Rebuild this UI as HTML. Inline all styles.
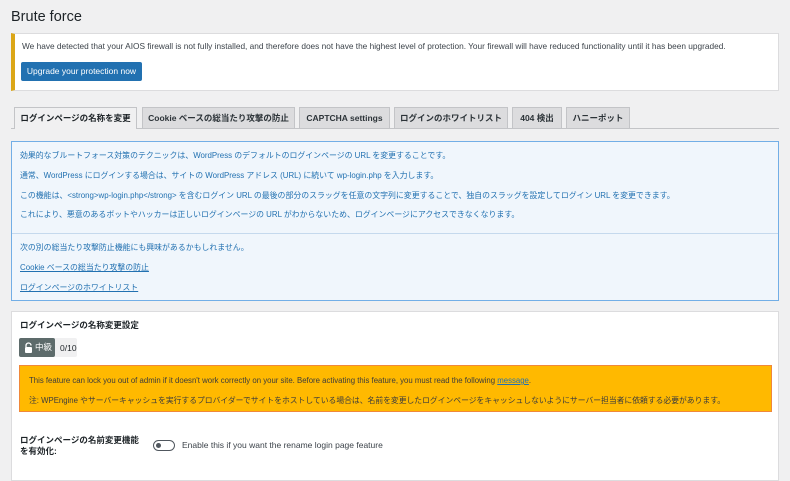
<!DOCTYPE html>
<html><head><meta charset="utf-8"><style>
*{box-sizing:border-box;margin:0;padding:0}
body{width:790px;height:477px;overflow:hidden;background:#f0f0f1;font-family:"Liberation Sans","Noto Sans CJK JP",sans-serif;color:#1d2327;position:relative}
.a{position:absolute;white-space:nowrap}
h1{position:absolute;left:11px;top:9px;font-size:14.5px;font-weight:400}
.notice{position:absolute;left:11px;top:33px;width:768px;height:58px;background:#fff;border:1px solid #dcdcde;border-left:4px solid #dba617}
.btn{position:absolute;left:6px;top:28px;width:121px;height:19px;background:#2271b1;border-radius:2px;color:#fff;font-size:8.5px;line-height:19px;text-align:center}
.tabs{position:absolute;left:11px;top:128px;width:768px;height:1px;background:#c3c4c7}
.tab{position:absolute;top:107px;height:21px;background:#dcdcde;border:1px solid #c3c4c7;border-bottom:none;font-size:8.5px;font-weight:bold;line-height:20px;text-align:center;color:#2c3338}
.info{position:absolute;left:11px;top:141px;width:768px;height:160px;background:#f0f6fc;border:1px solid #72aee6;color:#2271b1;font-size:7.9px}
.info div{position:absolute;left:8px;white-space:nowrap}
.panel{position:absolute;left:11px;top:311px;width:768px;height:170px;background:#fff;border:1px solid #dcdcde}
.warn{position:absolute;left:7px;top:53px;width:753px;height:47px;background:#ffb900;border:1px solid #f0883a;font-size:7.8px;color:#3c3c3c}
</style></head><body>
<h1>Brute force</h1>
<div class="notice">
<div class="a" style="left:7px;top:7px;font-size:8.3px;color:#3c434a">We have detected that your AIOS firewall is not fully installed, and therefore does not have the highest level of protection. Your firewall will have reduced functionality until it has been upgraded.</div>
<div class="btn">Upgrade your protection now</div>
</div>
<div class="tabs"></div>
<div class="tab" style="left:14px;width:123px;background:#f0f0f1;height:22px;color:#1d2327">ログインページの名称を変更</div>
<div class="tab" style="left:142px;width:153px">Cookie ベースの総当たり攻撃の防止</div>
<div class="tab" style="left:299px;width:91px">CAPTCHA settings</div>
<div class="tab" style="left:394px;width:114px">ログインのホワイトリスト</div>
<div class="tab" style="left:512px;width:50px">404 検出</div>
<div class="tab" style="left:566px;width:64px">ハニーポット</div>
<div class="info">
<div style="top:8px">効果的なブルートフォース対策のテクニックは、WordPress のデフォルトのログインページの URL を変更することです。</div>
<div style="top:28px">通常、WordPress にログインする場合は、サイトの WordPress アドレス (URL) に続いて wp-login.php を入力します。</div>
<div style="top:48px">この機能は、&lt;strong&gt;wp-login.php&lt;/strong&gt; を含むログイン URL の最後の部分のスラッグを任意の文字列に変更することで、独自のスラッグを設定してログイン URL を変更できます。</div>
<div style="top:67px">これにより、悪意のあるボットやハッカーは正しいログインページの URL がわからないため、ログインページにアクセスできなくなります。</div>
<div style="top:91px;left:0;width:766px;height:1px;background:#c5d9ed"></div>
<div style="top:100px">次の別の総当たり攻撃防止機能にも興味があるかもしれません。</div>
<div style="top:120px;text-decoration:underline">Cookie ベースの総当たり攻撃の防止</div>
<div style="top:140px;text-decoration:underline">ログインページのホワイトリスト</div>
</div>
<div class="panel">
<div class="a" style="left:8px;top:7px;font-size:8.5px;font-weight:bold">ログインページの名称変更設定</div>
<div class="a" style="left:7px;top:26px;width:58px;height:19px;background:#f0f0f1;border-radius:2px"></div>
<div class="a" style="left:7px;top:26px;width:36px;height:19px;background:#5d6b6b;border-radius:2px;color:#fff;font-size:8.5px;line-height:19px;padding-left:16px">中級</div>
<svg class="a" style="left:12px;top:30px" width="9" height="11" viewBox="0 0 9 11"><path d="M2 5V3.5a2.5 2.5 0 0 1 5 0" stroke="#fff" stroke-width="1.3" fill="none"/><rect x="1" y="5" width="7" height="6" rx="1" fill="#fff"/></svg>
<div class="a" style="left:48px;top:31px;font-size:8.5px">0/10</div>
<div class="warn">
<div class="a" style="left:9px;top:10px">This feature can lock you out of admin if it doesn't work correctly on your site. Before activating this feature, you must read the following <span style="color:#2271b1;text-decoration:underline">message</span>.</div>
<div class="a" style="left:9px;top:29px">注: WPEngine やサーバーキャッシュを実行するプロバイダーでサイトをホストしている場合は、名前を変更したログインページをキャッシュしないようにサーバー担当者に依頼する必要があります。</div>
</div>
<div class="a" style="left:8px;top:123px;font-size:8.5px;font-weight:bold;line-height:11px">ログインページの名前変更機能<br>を有効化:</div>
<div class="a" style="left:141px;top:128px;width:22px;height:11px;border:1.5px solid #50575e;border-radius:6px"><div style="position:absolute;left:2px;top:2px;width:5px;height:5px;border-radius:50%;background:#50575e"></div></div>
<div class="a" style="left:170px;top:128px;font-size:8.5px;color:#3c434a">Enable this if you want the rename login page feature</div>
</div>
</body></html>
